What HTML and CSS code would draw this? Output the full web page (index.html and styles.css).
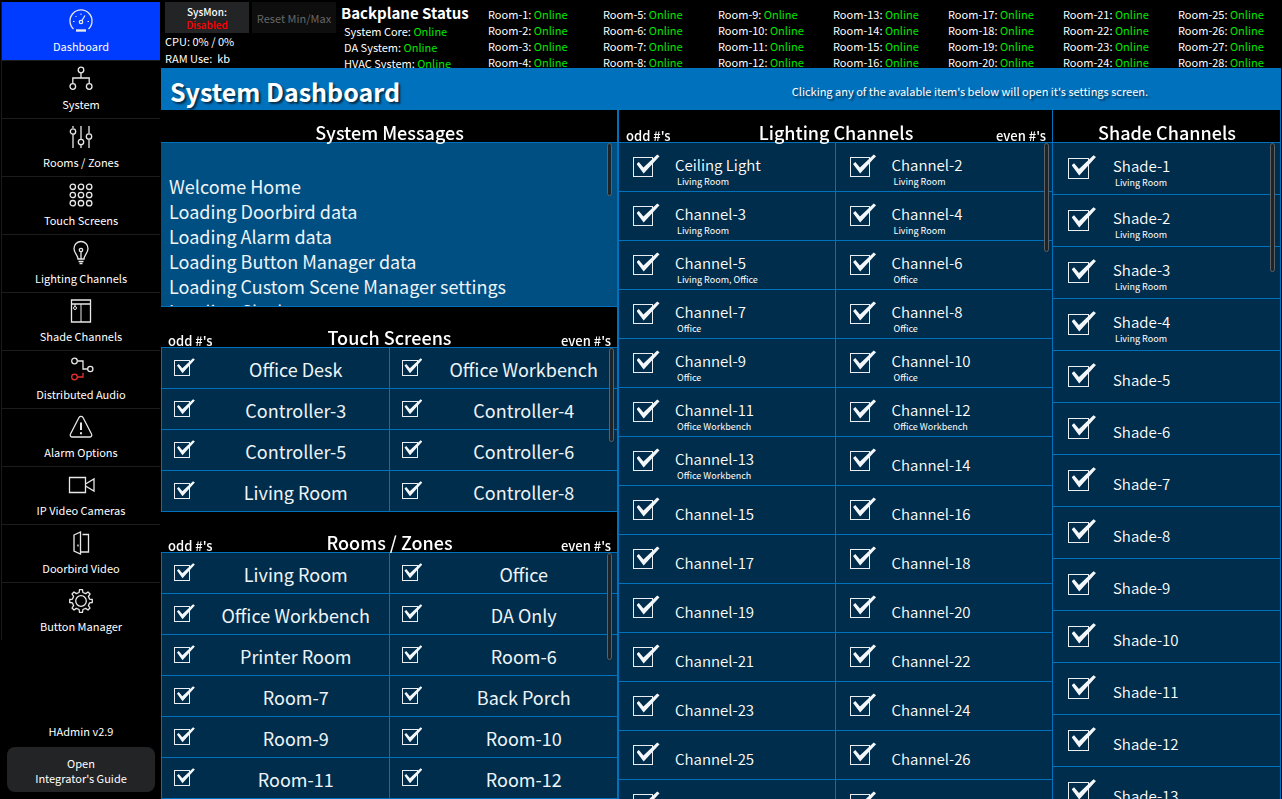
FILE: index.html
```html
<!DOCTYPE html>
<html lang="en">

<head>
    <meta charset="UTF-8">
    <meta name="viewport" content="width=device-width, initial-scale=1.0">
    <title>System Dashboard</title>
    <link rel="stylesheet" href="styles.css">
</head>

<body>

    <aside class="sidebar">
        <nav class="menu">
            <a href="#" class="active">
                <svg viewBox="0 0 24 24"><path d="M4.5 20A11 11 0 1 1 19.5 20"/><circle cx="12" cy="13" r="1.7"/><path d="M13 11.5L16 6.5"/><path d="M4 12.500h1.500M18.500 12.500h1.500M6.500 7l1 1M12 4.500v1.500" stroke-width="1"/><path d="M7 21.500h10" stroke-width="2.400"/></svg>
                <span>Dashboard</span>
            </a>
            <a href="#">
                <svg viewBox="0 0 24 24"><circle cx="12" cy="3" r="2.800"/><circle cx="3.800" cy="19.500" r="2.800"/><circle cx="20.200" cy="19.500" r="2.800"/><path d="M12 6v5M3.800 16.500v-5.500h16.400v5.500"/></svg>
                <span>System</span>
            </a>
            <a href="#">
                <svg viewBox="0 0 24 24"><path d="M4 1v2M4 9v14M12 1v13M12 20v3M20 1v7.500M20 14.500V23"/><circle cx="4" cy="6.500" r="2.700"/><circle cx="12" cy="17" r="2.700"/><circle cx="20" cy="11.500" r="2.700"/></svg>
                <span>Rooms / Zones</span>
            </a>
            <a href="#">
                <svg viewBox="0 0 24 24"><circle cx="3.800" cy="3.800" r="2.700"/><circle cx="12" cy="3.800" r="2.700"/><circle cx="20.200" cy="3.800" r="2.700"/><circle cx="3.800" cy="12" r="2.700"/><circle cx="12" cy="12" r="2.700"/><circle cx="20.200" cy="12" r="2.700"/><circle cx="3.800" cy="20.200" r="2.700"/><circle cx="12" cy="20.200" r="2.700"/><circle cx="20.200" cy="20.200" r="2.700"/></svg>
                <span>Touch Screens</span>
            </a>
            <a href="#">
                <svg viewBox="0 0 24 24"><path d="M9 18c0-4-4-5.500-4-10.500a7 7 0 0 1 14 0C19 12.500 15 14 15 18z"/><circle cx="12" cy="9" r="1.700"/><path d="M12 11v7M9.500 20.500h5M10.500 22.500h3"/></svg>
                <span>Lighting Channels</span>
            </a>
            <a href="#">
                <svg viewBox="0 0 24 24"><path d="M2.500 1h19v22h-19zM2.500 5h19"/><path d="M12 5v18M6 5v2.500" stroke-width="1"/><circle cx="6" cy="9" r="1.500" stroke-width="1"/></svg>
                <span>Shade Channels</span>
            </a>
            <a href="#">
                <svg viewBox="0 0 24 24"><circle cx="5.500" cy="4" r="2.800"/><path d="M8.500 4H14v8h4.500"/><circle cx="21.300" cy="12" r="2.600"/><g class="red"><circle cx="5.500" cy="20" r="2.800"/><path d="M8.500 20H14v-4"/></g></svg>
                <span>Distributed Audio</span>
            </a>
            <a href="#">
                <svg viewBox="0 0 24 24"><path d="M10 2.500a2.300 2.300 0 0 1 4 0L22.500 19a2 2 0 0 1-2 3h-17a2 2 0 0 1-2-3z"/><path d="M12 7.500v7.500M12 17.300v2" stroke-width="2"/></svg>
                <span>Alarm Options</span>
            </a>
            <a href="#">
                <svg viewBox="0 0 24 24"><path d="M0.500 4.500h16v15h-16zM16.500 11l8.500-5v12l-8.500-5"/></svg>
                <span>IP Video Cameras</span>
            </a>
            <a href="#">
                <svg viewBox="0 0 24 24"><path d="M5 4L11.500 1v22L5 20zM13.500 3.500h6v17.500h-7.500"/><path d="M9 13.500v2"/></svg>
                <span>Doorbird Video</span>
            </a>
            <a href="#">
                <svg viewBox="0 0 24 24"><circle cx="12" cy="12" r="5.300"/><path d="M10.100 3.500L10.500 0.700h3L13.900 3.500L16.700 4.600L19 3L21.100 5L19.400 7.300L20.500 10.100L23.300 10.500v3L20.500 13.900L19.400 16.700L21 19L19 21L16.700 19.400L13.900 20.500L13.500 23.300h-3L10.100 20.500L7.300 19.400L5 21L3 19L4.600 16.700L3.500 13.900L0.700 13.500v-3L3.500 10.100L4.600 7.300L3 5L5 3L7.300 4.600z" stroke-linejoin="round"/></svg>
                <span>Button Manager</span>
            </a>
        </nav>
        <div class="about">
            <p>HAdmin v2.9</p>
            <button type="button">Open<br>Integrator's Guide</button>
        </div>
    </aside>

    <div class="page">
        <header class="status">
            <div class="sysmon">
                <div class="sysmon-btns">
                    <button type="button" class="mon">SysMon:<b>Disabled</b></button>
                    <button type="button" class="reset" disabled>Reset Min/Max</button>
                </div>
                <p>CPU: 0% / 0%</p>
                <p>RAM Use: &nbsp;kb</p>
            </div>
            <div class="backplane">
                <h2>Backplane Status</h2>
                <p>System Core: <i>Online</i></p>
                <p>DA System: <i>Online</i></p>
                <p>HVAC System: <i>Online</i></p>
            </div>
            <div class="room-status" id="roomStatus"></div>
        </header>

        <div class="titlebar">
            <h1>System Dashboard</h1>
            <p>Clicking any of the avalable item's below will open it's settings screen.</p>
        </div>

        <main class="columns">
            <div class="col-left">
                <section class="panel">
                    <div class="head"><h2>System Messages</h2></div>
                    <div class="box">
                        <div class="messages">
                            <p>Welcome Home</p>
                            <p>Loading Doorbird data</p>
                            <p>Loading Alarm data</p>
                            <p>Loading Button Manager data</p>
                            <p>Loading Custom Scene Manager settings</p>
                            <p>Loading Clock</p>
                        </div>
                        <div class="thumb thumb-messages"></div>
                    </div>
                </section>
                <section class="panel">
                    <div class="head"><span>odd #'s</span><h2>Touch Screens</h2><span>even #'s</span></div>
                    <div class="box">
                        <div class="list two names framed" id="touchList"></div>
                        <div class="thumb thumb-touch"></div>
                    </div>
                </section>
                <section class="panel grow">
                    <div class="head"><span>odd #'s</span><h2>Rooms / Zones</h2><span>even #'s</span></div>
                    <div class="box">
                        <div class="list two names framed" id="roomList"></div>
                        <div class="thumb thumb-rooms"></div>
                    </div>
                </section>
            </div>

            <section class="panel lighting">
                <div class="head"><span>odd #'s</span><h2>Lighting Channels</h2><span>even #'s</span></div>
                <div class="box">
                    <div class="list two channels" id="lightList"></div>
                    <div class="thumb thumb-lights"></div>
                </div>
            </section>

            <section class="panel shades">
                <div class="head"><h2>Shade Channels</h2></div>
                <div class="box">
                    <div class="list channels" id="shadeList"></div>
                    <div class="thumb thumb-shades"></div>
                </div>
            </section>
        </main>
    </div>

    <script src="script.js"></script>
</body>

</html>
```
FILE: styles.css
```css
* {
    margin: 0;
    padding: 0;
    box-sizing: border-box;
}

body {
    display: flex;
    height: 100vh;
    overflow: hidden;
    background: #000;
    color: #fff;
    font: 11px/16px "Noto Sans CJK SC", "Noto Sans", sans-serif;
}

a {
    color: inherit;
    text-decoration: none;
}

button {
    border: 0;
    color: inherit;
    font: inherit;
    background: #232426;
}

/* sidebar */
.sidebar {
    display: flex;
    flex: none;
    flex-direction: column;
    justify-content: space-between;
    width: 161px;
    padding: 2px 1px 7px;
}

.menu {
    border-left: 1px solid #1a1a1a;
}

.menu a {
    display: flex;
    flex-direction: column;
    align-items: center;
    height: 58px;
    padding-top: 6px;
    border-top: 1px solid #1c1c1c;
}

.menu a.active {
    border-color: #003cff;
    background: #003cff;
}

.menu svg {
    width: 24px;
    height: 24px;
    margin-bottom: 5px;
    overflow: visible;
    fill: none;
    stroke: #e8e8e8;
    stroke-width: 1.3;
}

.menu .red {
    stroke: #e8302a;
}

.about {
    padding: 0 5px 0 6px;
    text-align: center;
}

.about button {
    width: 100%;
    height: 45px;
    margin-top: 8px;
    padding-top: 2px;
    border-radius: 8px;
    line-height: 15px;
}

/* top status */
.page {
    display: flex;
    flex: 1;
    flex-direction: column;
    min-width: 0;
    padding-right: 1px;
}

.status {
    display: flex;
    height: 68px;
    overflow: hidden;
}

.sysmon {
    flex: none;
    width: 180px;
    padding: 2px 0 0 4px;
}

.sysmon-btns {
    display: flex;
    gap: 3px;
}

.sysmon-btns button {
    width: 84px;
    height: 31px;
}

.sysmon .mon {
    font-size: 10px;
    font-weight: 500;
    line-height: 13px;
}

.mon b {
    display: block;
    color: #f00;
    font-weight: 500;
}

.sysmon .reset {
    background: #0e0e0e;
    color: #666;
}

.sysmon p {
    line-height: 17px;
}

.backplane {
    flex: none;
    width: 147px;
    padding-top: 3px;
}

.backplane h2 {
    font-size: 15px;
    font-weight: 700;
    line-height: 20px;
}

.backplane p {
    padding-left: 3px;
}

.status i {
    color: #00e600;
    font-style: normal;
}

.room-status {
    display: grid;
    flex: 1;
    grid-template-rows: repeat(4, 16px);
    grid-auto-columns: 115px;
    grid-auto-flow: column;
    padding-top: 6px;
    white-space: nowrap;
}

.titlebar {
    display: grid;
    flex: none;
    grid-template-columns: 44% 56%;
    align-items: center;
    height: 42px;
    padding: 4px 0 0 9px;
    background: #0072bd;
    text-shadow: 2px 2px 2px rgba(0, 0, 0, .6);
}

.titlebar h1 {
    font-size: 25px;
    font-weight: 700;
    line-height: 34px;
}

.titlebar p {
    text-align: center;
}

/* columns */
.columns {
    display: grid;
    flex: 1;
    grid-template-columns: 456fr 435fr 229fr;
    min-height: 0;
}

.col-left {
    display: flex;
    flex-direction: column;
    min-height: 0;
}

.panel {
    display: flex;
    flex-direction: column;
    min-height: 0;
}

.grow {
    flex: 1;
}

.lighting {
    border-left: 2px solid #0072bd;
}

.shades {
    border-right: 1px solid #0072bd;
    border-left: 1px solid #0072bd;
}

.head {
    position: relative;
    z-index: 1;
    display: flex;
    flex: none;
    align-items: flex-end;
    justify-content: space-between;
    height: 40px;
    padding: 0 6px 0 7px;
}

.columns > .panel .head,
.col-left > .panel:first-child .head {
    height: 32px;
}

.head h2 {
    flex: 1;
    font-size: 18px;
    font-weight: 500;
    line-height: 20px;
    text-align: center;
}

.head span {
    width: 50px;
    font-size: 13px;
    font-weight: 500;
    line-height: 12px;
    white-space: nowrap;
}

.box {
    position: relative;
    flex: 1;
    min-height: 0;
}

.messages {
    height: 165px;
    padding: 31px 8px 0;
    overflow: auto;
    scrollbar-width: none;
    border-top: 1px solid #0072bd;
    border-bottom: 1px solid #0072bd;
    background: #004f82;
    color: #eef4f8;
    font-size: 18px;
    line-height: 25px;
}

.list {
    display: grid;
    grid-template-columns: 1fr;
    align-content: start;
    height: 100%;
    overflow: auto;
    scrollbar-width: none;
    border-top: 1px solid #0072bd;
    background: #002d4b;
}

.two {
    grid-template-columns: 1fr 1fr;
}

.framed {
    border-left: 1px solid #0072bd;
}

#touchList {
    height: 165px;
}

.item {
    display: flex;
    border-bottom: 1px solid #0072bd;
    color: #eef4f8;
}

.two .item:nth-child(odd) {
    border-right: 1px solid #0072bd;
}

.names .item {
    height: 41px;
    font-size: 18px;
    line-height: 43px;
}

.names .text {
    flex: 1;
    text-align: center;
}

.channels .item {
    height: 49px;
    color: #fff;
    font-size: 15px;
    font-weight: 350;
}

.channels .text {
    display: flex;
    flex-direction: column;
    justify-content: center;
    padding-top: 7px;
}

.channels .name {
    line-height: 22px;
}

.channels .place {
    padding-left: 2px;
    font-size: 9px;
    font-weight: 400;
    line-height: 12px;
}

#shadeList .item {
    height: 52px;
}

/* tick box with a long tick */
.tick {
    position: relative;
    flex: none;
    appearance: none;
    width: 16px;
    height: 16px;
    margin: 12px 13px 0 12px;
    border: 1px solid #e8eef2;
}

.channels .tick {
    width: 20px;
    height: 20px;
    margin: 14px 22px 0 14px;
}

#shadeList .tick {
    width: 21px;
    height: 21px;
    margin: 15px 24px 0 15px;
}

.tick:checked::after {
    content: "";
    position: absolute;
    top: -20%;
    left: 14%;
    width: 128%;
    height: 110%;
    background: #f4f7fa;
    clip-path: polygon(0 48%, 10% 38%, 30% 66%, 90% 0, 100% 9%, 31% 97%);
}

.thumb {
    position: absolute;
    top: 1px;
    right: 5px;
    width: 5px;
    border: 1px solid #5c6266;
    border-radius: 3px;
    background: #1c2329;
}

.thumb-messages {
    height: 53px;
}

.thumb-touch {
    right: 3px;
    height: 94px;
}

.thumb-rooms {
    height: 107px;
}

.thumb-lights {
    right: 3px;
    height: 109px;
}

.thumb-shades {
    height: 129px;
}
```
FILE: script.js
```js
var rooms = document.querySelector("#roomStatus");
for (var i = 1; i <= 28; i++) {
    rooms.innerHTML += "<p>Room-" + i + ": <i>Online</i></p>";
}

// each entry is a name, or [name, place]
function fill(id, items) {
    var html = "";
    for (var i = 0; i < items.length; i++) {
        var item = [].concat(items[i]);
        html += '<label class="item"><input type="checkbox" class="tick" checked>';
        html += '<span class="text"><span class="name">' + item[0] + '</span>';
        if (item[1]) {
            html += '<span class="place">' + item[1] + '</span>';
        }
        html += '</span></label>';
    }
    document.getElementById(id).innerHTML = html;
}

fill("touchList", ["Office Desk", "Office Workbench", "Controller-3", "Controller-4",
    "Controller-5", "Controller-6", "Living Room", "Controller-8"]);

fill("roomList", ["Living Room", "Office", "Office Workbench", "DA Only", "Printer Room", "Room-6",
    "Room-7", "Back Porch", "Room-9", "Room-10", "Room-11", "Room-12"]);

var lights = [
    ["Ceiling Light", "Living Room"],
    ["Channel-2", "Living Room"],
    ["Channel-3", "Living Room"],
    ["Channel-4", "Living Room"],
    ["Channel-5", "Living Room, Office"],
    ["Channel-6", "Office"],
    ["Channel-7", "Office"],
    ["Channel-8", "Office"],
    ["Channel-9", "Office"],
    ["Channel-10", "Office"],
    ["Channel-11", "Office Workbench"],
    ["Channel-12", "Office Workbench"],
    ["Channel-13", "Office Workbench"]
];
for (var i = 14; i <= 28; i++) {
    lights.push("Channel-" + i);
}
fill("lightList", lights);

var shades = [];
for (var i = 1; i <= 13; i++) {
    shades.push(["Shade-" + i, i <= 4 ? "Living Room" : ""]);
}
fill("shadeList", shades);
```
